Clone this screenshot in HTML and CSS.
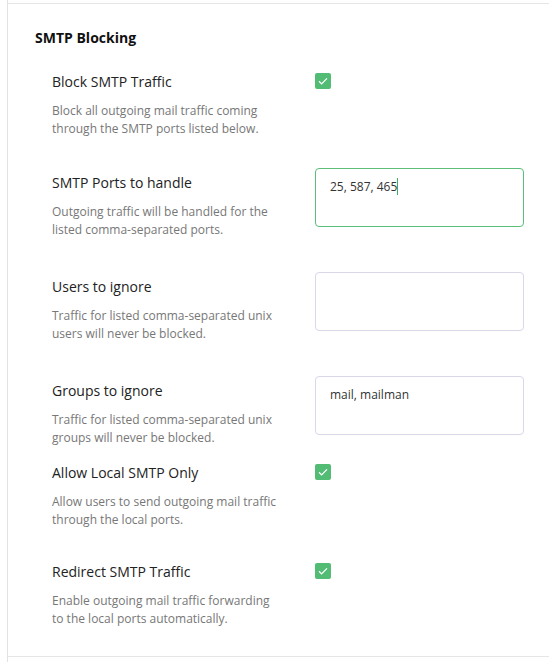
FILE: index.html
```html
<!DOCTYPE html>
<html lang="en">
<head>
<meta charset="utf-8">
<title>SMTP Blocking</title>
<link rel="stylesheet" href="styles.css">
</head>
<body>
<div class="panel">
  <section class="section">
    <h2 class="section-title">SMTP Blocking</h2>

    <div class="row row-1">
      <div class="info">
        <div class="label">Block SMTP Traffic</div>
        <p class="desc">Block all outgoing mail traffic coming through the SMTP ports listed below.</p>
      </div>
      <div class="control"><span class="check"><svg viewBox="0 0 16 16" width="16" height="16"><path d="M4 8.3l2.6 2.6L12 5.4" fill="none" stroke="#fff" stroke-width="1.3"/></svg></span></div>
    </div>

    <div class="row row-2">
      <div class="info">
        <div class="label">SMTP Ports to handle</div>
        <p class="desc">Outgoing traffic will be handled for the listed comma-separated ports.</p>
      </div>
      <div class="control"><div class="field focused">25, 587, 465<span class="caret"></span></div></div>
    </div>

    <div class="row row-3">
      <div class="info">
        <div class="label">Users to ignore</div>
        <p class="desc">Traffic for listed comma-separated unix users will never be blocked.</p>
      </div>
      <div class="control"><div class="field"></div></div>
    </div>

    <div class="row row-4">
      <div class="info">
        <div class="label">Groups to ignore</div>
        <p class="desc">Traffic for listed comma-separated unix groups will never be blocked.</p>
      </div>
      <div class="control"><div class="field">mail, mailman</div></div>
    </div>

    <div class="row row-5">
      <div class="info">
        <div class="label">Allow Local SMTP Only</div>
        <p class="desc">Allow users to send outgoing mail traffic through the local ports.</p>
      </div>
      <div class="control"><span class="check"><svg viewBox="0 0 16 16" width="16" height="16"><path d="M4 8.3l2.6 2.6L12 5.4" fill="none" stroke="#fff" stroke-width="1.3"/></svg></span></div>
    </div>

    <div class="row row-6">
      <div class="info">
        <div class="label">Redirect SMTP Traffic</div>
        <p class="desc">Enable outgoing mail traffic forwarding to the local ports automatically.</p>
      </div>
      <div class="control"><span class="check"><svg viewBox="0 0 16 16" width="16" height="16"><path d="M4 8.3l2.6 2.6L12 5.4" fill="none" stroke="#fff" stroke-width="1.3"/></svg></span></div>
    </div>
  </section>
</div>
</body>
</html>
```

FILE: styles.css
```css
html, body {
  margin: 0;
  padding: 0;
  background: #fff;
}
body {
  font-family: "Open Sans", "Noto Sans", sans-serif;
  color: #222;
  height: 662px;
  overflow: hidden;
}
.panel {
  margin-left: 7px;
  border-left: 1px solid #e2e2e2;
  padding-top: 3px;
  height: 659px;
}
.section {
  border-top: 1px solid #e6e6e6;
  border-bottom: 1px solid #e6e6e6;
  padding: 24px 0 0 27px;
  height: 628px;
}
.section-title {
  margin: 0 0 24px;
  font-size: 14px;
  line-height: 20px;
  font-weight: 700;
  color: #111;
}
.row {
  display: flex;
  align-items: flex-start;
  padding-left: 17px;
}
.info {
  width: 263px;
  flex: none;
}
.label {
  font-size: 14px;
  line-height: 20px;
  color: #222;
}
.desc {
  margin: 10px 0 0;
  font-size: 12px;
  line-height: 18px;
  color: #777;
  width: 228px;
}
.control {
  flex: none;
}
.check {
  display: block;
  width: 16px;
  height: 16px;
  margin-top: 1px;
  border-radius: 2px;
  background: #52bb74;
}
.check svg { display: block; }
.field {
  box-sizing: border-box;
  width: 209px;
  height: 59px;
  margin-top: -5px;
  border: 1px solid #d9d7e8;
  border-radius: 4px;
  padding: 9px 14px;
  font-size: 12px;
  line-height: 18px;
  color: #333;
}
.field.focused {
  border-color: #5bbf7b;
}
.caret {
  display: inline-block;
  width: 1px;
  height: 17px;
  background: #3fae62;
  vertical-align: -4px;
}
.row-1 { margin-bottom: 35px; }
.row-2 { margin-bottom: 38px; }
.row-3 { margin-bottom: 38px; }
.row-4 { margin-bottom: 16px; }
.row-5 { margin-bottom: 33px; }
```
